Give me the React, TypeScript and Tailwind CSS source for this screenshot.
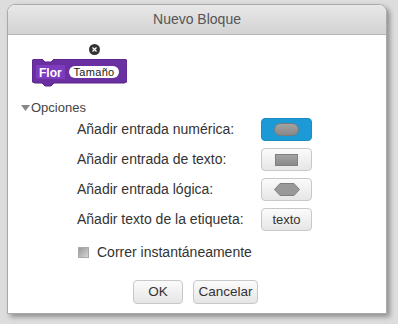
import React from 'react';

function Btn({ children, active }: { children?: React.ReactNode; active?: boolean }) {
  return (
    <div
      className={`w-[51px] h-[23px] rounded-[4px] border flex items-center justify-center ${
        active
          ? 'bg-[#1b9ad6] border-[#1b8cc4]'
          : 'bg-gradient-to-b from-[#fbfbfb] to-[#e6e6e6] border-[#c8c8c8]'
      }`}
    >
      {children}
    </div>
  );
}

const rows = [
  { label: 'Añadir entrada numérica:', kind: 'num' },
  { label: 'Añadir entrada de texto:', kind: 'text' },
  { label: 'Añadir entrada lógica:', kind: 'bool' },
  { label: 'Añadir texto de la etiqueta:', kind: 'label' },
];

export default function App() {
  return (
    <div
      className="w-[398px] h-[324px] bg-[#dcdddc] pt-[4px] pl-[7px]"
      style={{ fontFamily: '"Liberation Sans", Arial, sans-serif' }}
    >
      <div className="w-[380px] h-[310px] bg-white rounded-t-[8px] border border-[#aaaaaa] shadow-[3px_3px_5px_rgba(0,0,0,0.35)] flex flex-col">
        {/* Título */}
        <div className="h-[30px] shrink-0 rounded-t-[7px] bg-gradient-to-b from-[#e8e8e8] to-[#d3d3d3] border-b border-[#b4b4b4] flex items-center justify-center text-[14px] text-[#555]">
          Nuevo Bloque
        </div>

        {/* Bloque */}
        <div className="relative h-[62px] shrink-0">
          <svg className="absolute left-[24px] top-[24px]" width="95" height="30" viewBox="0 0 95 30">
            <path
              d="M3 0 H10 L13 3 H19 L22 0 H92 Q95 0 95 3 V21 Q95 24 92 24 H22 L19 27 H13 L10 24 H3 Q0 24 0 21 V3 Q0 0 3 0 Z"
              fill="#6a2fa0"
              stroke="#5a2489"
              strokeWidth="1"
            />
            <rect x="4" y="6" width="29" height="14" fill="#7d3bbd" />
          </svg>
          <span className="absolute left-[31px] top-[31px] text-[12px] font-bold text-white leading-[14px]">Flor</span>
          <div className="absolute left-[61px] top-[31px] w-[50px] h-[12px] rounded-full bg-white flex items-center justify-center text-[11px] leading-[11px] text-[#222] tracking-[0.3px]">
            Tamaño
          </div>
          <div className="absolute left-[81px] top-[9px] w-[11px] h-[11px] rounded-full bg-[#333] flex items-center justify-center">
            <svg width="5" height="5" viewBox="0 0 5 5">
              <path d="M0.5 0.5 L4.5 4.5 M4.5 0.5 L0.5 4.5" stroke="white" strokeWidth="1.3" />
            </svg>
          </div>
        </div>

        {/* Opciones */}
        <div className="flex items-center pl-[13px] mt-[4px] text-[13px] text-[#444] leading-[14px]">
          <svg width="9" height="8" viewBox="0 0 9 8" className="mr-[1px]">
            <path d="M0 1 H9 L4.5 7 Z" fill="#888" />
          </svg>
          Opciones
        </div>

        <div className="flex flex-col gap-[7px] mt-[3px]">
          {rows.map((r) => (
            <div key={r.label} className="flex items-center h-[23px]">
              <span className="w-[253px] pl-[69px] text-[14px] text-[#333] whitespace-nowrap">{r.label}</span>
              {r.kind === 'num' && (
                <Btn active>
                  <div className="w-[25px] h-[13px] rounded-full bg-gradient-to-b from-[#a3a3a3] to-[#888] border border-[#7a7a7a]" />
                </Btn>
              )}
              {r.kind === 'text' && (
                <Btn>
                  <div className="w-[23px] h-[12px] bg-gradient-to-b from-[#a3a3a3] to-[#8a8a8a] border border-[#808080]" />
                </Btn>
              )}
              {r.kind === 'bool' && (
                <Btn>
                  <svg width="26" height="13" viewBox="0 0 26 13">
                    <path d="M6 0.5 H20 L25.5 6.5 L20 12.5 H6 L0.5 6.5 Z" fill="#999" stroke="#808080" />
                  </svg>
                </Btn>
              )}
              {r.kind === 'label' && (
                <Btn>
                  <span className="text-[13px] text-[#333]">texto</span>
                </Btn>
              )}
            </div>
          ))}
        </div>

        <div className="flex items-center pl-[70px] mt-[11px]">
          <div className="w-[11px] h-[11px] border border-[#aaa] bg-gradient-to-br from-[#999] to-[#d5d5d5]" />
          <span className="ml-[8px] text-[14px] text-[#333]">Correr instantáneamente</span>
        </div>

        <div className="flex gap-[10px] pl-[125px] mt-[17px]">
          <div className="w-[50px] h-[24px] rounded-[4px] border border-[#c8c8c8] bg-gradient-to-b from-[#fbfbfb] to-[#e6e6e6] flex items-center justify-center text-[13.5px] text-[#333]">
            OK
          </div>
          <div className="w-[65px] h-[24px] rounded-[4px] border border-[#c8c8c8] bg-gradient-to-b from-[#fbfbfb] to-[#e6e6e6] flex items-center justify-center text-[13.5px] text-[#333]">
            Cancelar
          </div>
        </div>
      </div>
    </div>
  );
}
